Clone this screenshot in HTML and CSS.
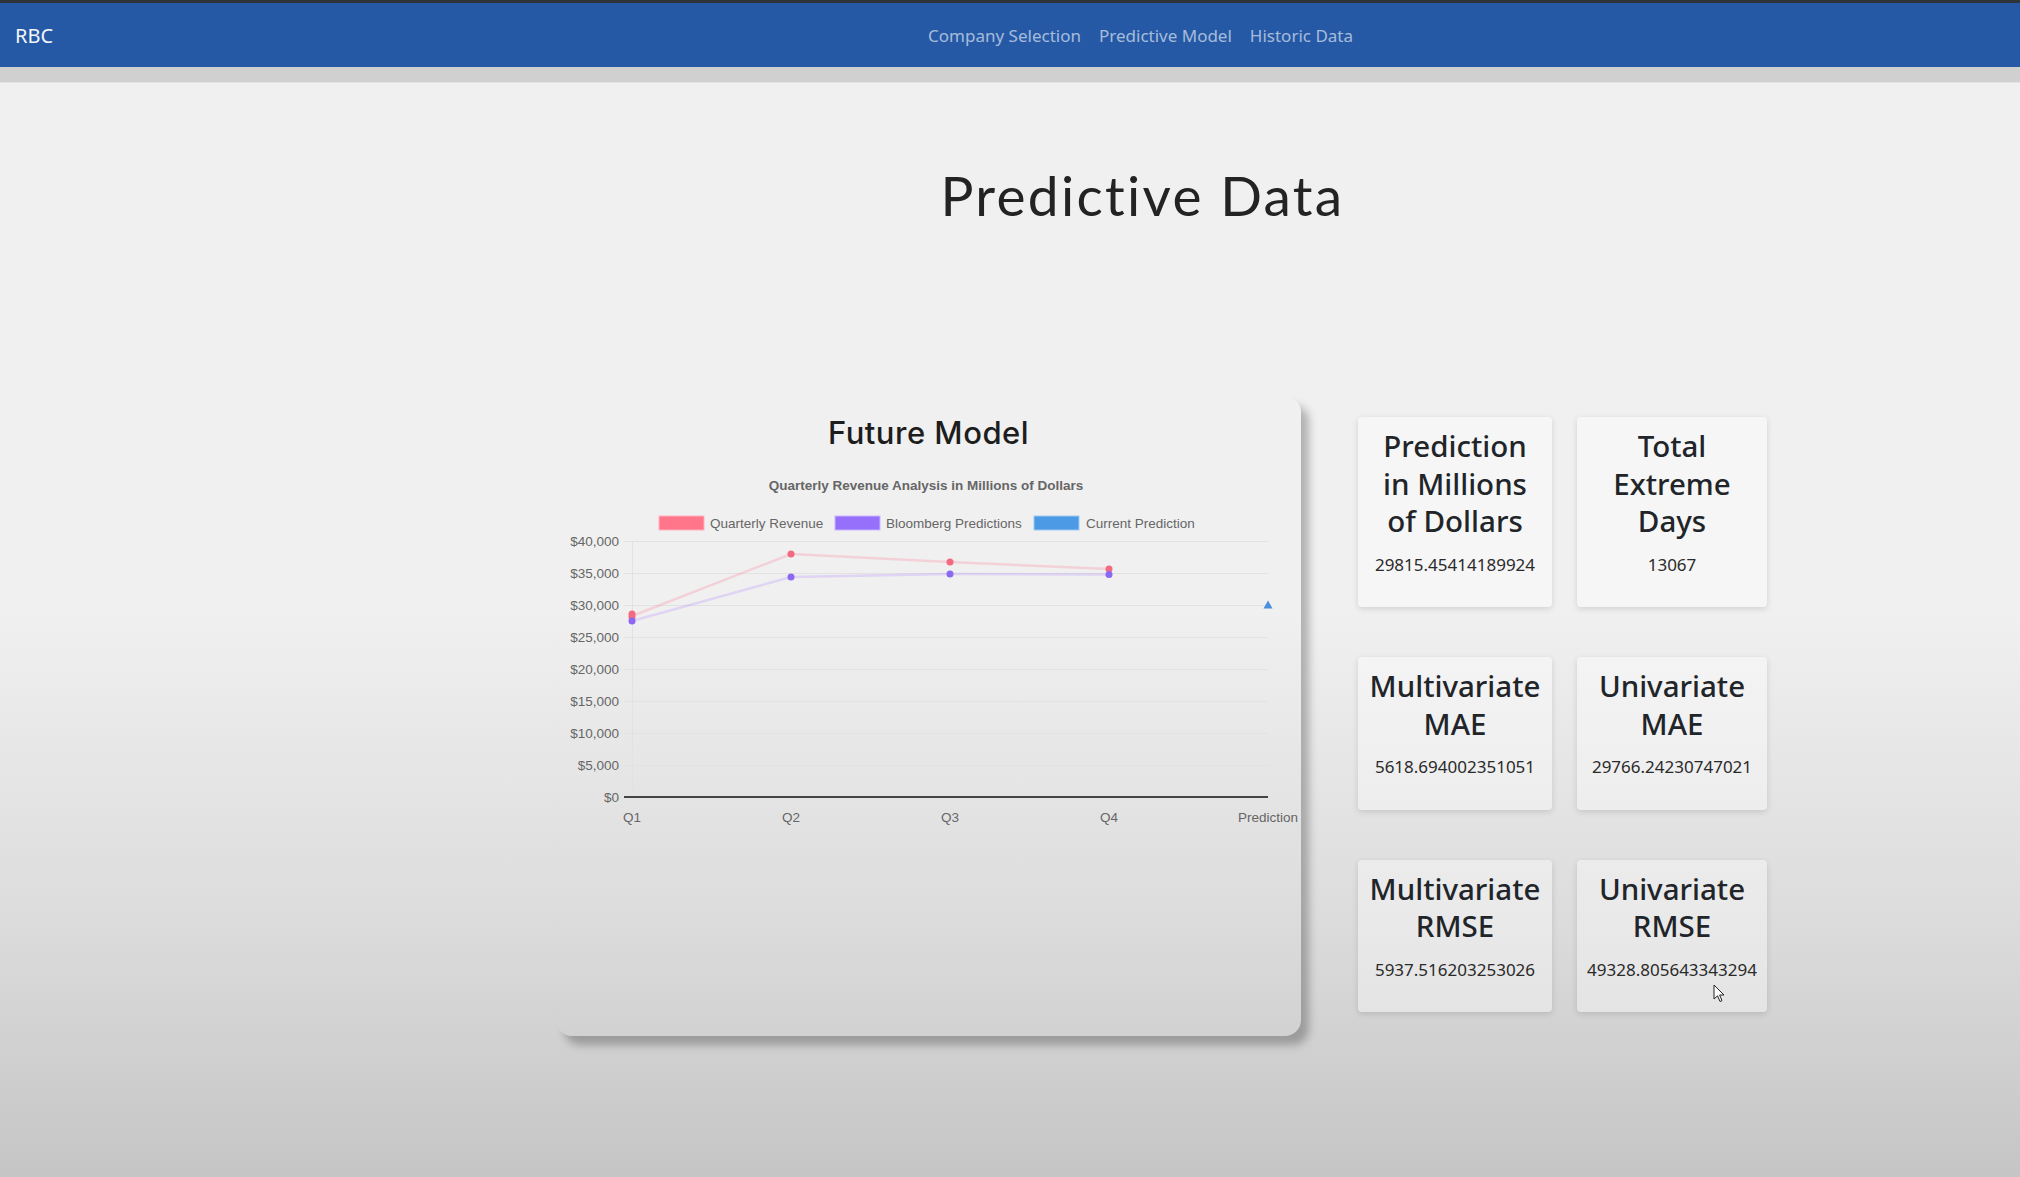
FILE: index.html
```html
<!DOCTYPE html>
<html lang="en">
<head>
<meta charset="utf-8">
<title>Predictive Data</title>
<link rel="stylesheet" href="styles.css">
</head>
<body>
<header class="navbar">
  <a class="brand" href="#">RBC</a>
  <ul class="nav-links">
    <li><a href="#">Company Selection</a></li>
    <li><a href="#">Predictive Model</a></li>
    <li><a href="#">Historic Data</a></li>
  </ul>
</header>
<div class="band"></div>
<main class="content">
  <h1 class="page-title">Predictive Data</h1>
  <div class="row">
    <section class="chart-card">
      <h2 class="chart-heading">Future Model</h2>
      <svg class="chart" width="744" height="380" viewBox="0 0 744 380" xmlns="http://www.w3.org/2000/svg">
        <text class="c-title" x="370" y="24" text-anchor="middle">Quarterly Revenue Analysis in Millions of Dollars</text>
        <rect x="103" y="50" width="45" height="14" fill="#ff7589" stroke="#ffb3bf" stroke-width="1"/>
        <text class="c-text" x="154" y="62">Quarterly Revenue</text>
        <rect x="279" y="50" width="45" height="14" fill="#9670fb" stroke="#c9b5ff" stroke-width="1"/>
        <text class="c-text" x="330" y="62">Bloomberg Predictions</text>
        <rect x="478" y="50" width="45" height="14" fill="#4c9ae6" stroke="#9dcaf2" stroke-width="1"/>
        <text class="c-text" x="530" y="62">Current Prediction</text>
        <g stroke="#e2e2e2" stroke-width="1">
          <line x1="68" y1="75.5" x2="712" y2="75.5"/>
          <line x1="68" y1="107.5" x2="712" y2="107.5"/>
          <line x1="68" y1="139.5" x2="712" y2="139.5"/>
          <line x1="68" y1="171.5" x2="712" y2="171.5"/>
          <line x1="68" y1="203.5" x2="712" y2="203.5"/>
          <line x1="68" y1="235.5" x2="712" y2="235.5"/>
          <line x1="68" y1="267.5" x2="712" y2="267.5"/>
          <line x1="68" y1="299.5" x2="712" y2="299.5"/>
          <line x1="76.5" y1="75" x2="76.5" y2="331"/>
        </g>
        <line x1="68" y1="331" x2="712" y2="331" stroke="#111" stroke-width="1.6"/>
        <g class="c-text" text-anchor="end">
          <text x="63" y="80">$40,000</text>
          <text x="63" y="112">$35,000</text>
          <text x="63" y="144">$30,000</text>
          <text x="63" y="176">$25,000</text>
          <text x="63" y="208">$20,000</text>
          <text x="63" y="240">$15,000</text>
          <text x="63" y="272">$10,000</text>
          <text x="63" y="304">$5,000</text>
          <text x="63" y="336">$0</text>
        </g>
        <g class="c-text" text-anchor="middle">
          <text x="76" y="356">Q1</text>
          <text x="235" y="356">Q2</text>
          <text x="394" y="356">Q3</text>
          <text x="553" y="356">Q4</text>
          <text x="712" y="356">Prediction</text>
        </g>
        <polyline points="76,150 235,88 394,96 553,103" fill="none" stroke="rgba(255,99,132,0.22)" stroke-width="2.5"/>
        <polyline points="76,155 235,111 394,108 553,108.5" fill="none" stroke="rgba(153,102,255,0.2)" stroke-width="2.5"/>
        <g fill="#f26a80">
          <circle cx="76" cy="148" r="3.5"/>
          <circle cx="76" cy="151" r="3.5"/>
          <circle cx="235" cy="88" r="3.5"/>
          <circle cx="394" cy="96" r="3.5"/>
          <circle cx="553" cy="103" r="3.5"/>
        </g>
        <g fill="#8b68f2">
          <circle cx="76" cy="155" r="3.5"/>
          <circle cx="235" cy="111" r="3.5"/>
          <circle cx="394" cy="108" r="3.5"/>
          <circle cx="553" cy="108.5" r="3.5"/>
        </g>
        <polygon points="712,134.5 716.5,142.5 707.5,142.5" fill="#4a8fdc"/>
      </svg>
    </section>
    <section class="stats">
      <div class="stat-card">
        <h2>Prediction in Millions of Dollars</h2>
        <p>29815.45414189924</p>
      </div>
      <div class="stat-card">
        <h2>Total Extreme Days</h2>
        <p>13067</p>
      </div>
      <div class="stat-card">
        <h2>Multivariate MAE</h2>
        <p>5618.694002351051</p>
      </div>
      <div class="stat-card">
        <h2>Univariate MAE</h2>
        <p>29766.24230747021</p>
      </div>
      <div class="stat-card">
        <h2>Multivariate RMSE</h2>
        <p>5937.516203253026</p>
      </div>
      <div class="stat-card">
        <h2>Univariate RMSE</h2>
        <p>49328.805643343294</p>
      </div>
    </section>
  </div>
</main>
<svg class="cursor" width="14" height="20" viewBox="0 0 14 20" xmlns="http://www.w3.org/2000/svg">
  <path d="M1 1 L1 15 L4.5 11.8 L7 17.5 L9 16.6 L6.6 11 L11 11 Z" fill="#fff" stroke="#222" stroke-width="1" stroke-linejoin="round"/>
</svg>
</body>
</html>
```

FILE: styles.css
```css
* {
  box-sizing: border-box;
}

html, body {
  margin: 0;
  padding: 0;
}

body {
  min-height: 1177px;
  background: linear-gradient(to bottom, #f0f0f0 0%, #f0f0f0 52%, #dcdcdc 78%, #c5c5c5 100%);
  font-family: "Noto Sans", "Open Sans", sans-serif;
  color: #212529;
  position: relative;
}

.navbar {
  height: 67px;
  border-top: 3px solid #2f333a;
  background: #2559a6;
  display: flex;
  align-items: center;
  padding: 0 0 0 15px;
}

.brand {
  font-family: "Noto Sans", sans-serif;
  font-size: 20px;
  color: #f4f6fa;
  text-decoration: none;
}

.nav-links {
  list-style: none;
  margin: 0 0 0 875px;
  padding: 0;
  display: flex;
  gap: 18px;
}

.nav-links a {
  font-family: "Noto Sans", sans-serif;
  font-size: 17px;
  color: rgba(255, 255, 255, 0.6);
  text-decoration: none;
}

.band {
  height: 16px;
  background: #d0d0d0;
  border-bottom: 1px solid #e4e4e4;
}

.content {
  margin-left: 556px;
  width: 1211px;
  padding-top: 79px;
}

.page-title {
  margin: 0 0 168px;
  padding-right: 38px;
  text-align: center;
  font-family: "Lato", sans-serif;
  font-weight: 400;
  font-size: 55px;
  line-height: 66px;
  letter-spacing: 2.3px;
  color: #232323;
}

.row {
  display: flex;
  align-items: flex-start;
  gap: 57px;
}

.chart-card {
  width: 745px;
  height: 640px;
  padding-top: 18px;
  border-radius: 16px;
  box-shadow: 8px 9px 8px rgba(0, 0, 0, 0.26);
}

.chart-heading {
  margin: 0 0 15px;
  text-align: center;
  font-family: "Inter", sans-serif;
  font-weight: 500;
  font-size: 31px;
  line-height: 37px;
  letter-spacing: 0.5px;
  color: #1d1d1d;
}

.chart {
  display: block;
}

.c-title {
  font-family: "Liberation Sans", Arial, sans-serif;
  font-weight: bold;
  font-size: 13.5px;
  fill: #666;
}

.c-text {
  font-family: "Liberation Sans", Arial, sans-serif;
  font-size: 13.5px;
  fill: #666;
}

.stats {
  margin-top: 21px;
  display: grid;
  grid-template-columns: 194px 190px;
  column-gap: 25px;
  row-gap: 50px;
}

.stat-card {
  padding: 10px 10px 30px;
  background: rgba(255, 255, 255, 0.38);
  border-radius: 4px;
  box-shadow: 0 2px 6px rgba(0, 0, 0, 0.13);
  text-align: center;
}

.stat-card h2 {
  margin: 0 0 12px;
  font-family: "Noto Sans", sans-serif;
  font-weight: 500;
  font-size: 29.5px;
  line-height: 37.5px;
  color: #212529;
}

.stat-card p {
  margin: 0;
  font-family: "Noto Sans", sans-serif;
  font-size: 17px;
  line-height: 25.5px;
  color: #2a2a2a;
}

.cursor {
  position: absolute;
  left: 1713px;
  top: 984px;
}
```
